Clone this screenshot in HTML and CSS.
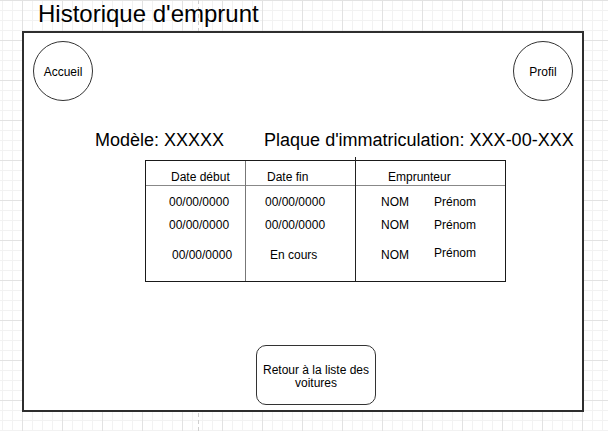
FILE: index.html
```html
<!DOCTYPE html>
<html lang="fr">
<head>
    <meta charset="UTF-8">
    <meta name="viewport" content="width=device-width, initial-scale=1.0">
    <title>Historique d'emprunt</title>

    <link rel="stylesheet" href="styles.css">
</head>
<body>
    <h1 class="title">Historique d'emprunt</h1>

    <div class="frame">
        <div class="topbar">
            <a href="#" class="round">Accueil</a>
            <a href="#" class="round">Profil</a>
        </div>

        <div class="info">
            <p>Modèle: XXXXX</p>
            <p>Plaque d'immatriculation: XXX-00-XXX</p>
        </div>

        <!-- tableau des emprunts -->
        <div class="loans">
            <div class="col c1">
                <div class="head">Date début</div>
                <div class="cell r1">00/00/0000</div>
                <div class="cell r2">00/00/0000</div>
                <div class="cell r3 shift">00/00/0000</div>
            </div>
            <div class="col c2">
                <div class="head">Date fin</div>
                <div class="cell r1">00/00/0000</div>
                <div class="cell r2">00/00/0000</div>
                <div class="cell r3 shift">En cours</div>
            </div>
            <div class="col c3">
                <div class="head">Emprunteur</div>
                <div class="cell r1"><span class="nom">NOM</span><span>Prénom</span></div>
                <div class="cell r2"><span class="nom">NOM</span><span>Prénom</span></div>
                <div class="cell r3"><span class="nom">NOM</span><span class="up">Prénom</span></div>
            </div>
        </div>

        <a href="#" class="back">Retour à la liste des voitures</a>
    </div>
</body>
</html>
```

FILE: styles.css
```css
html, body {
    margin: 0;
    height: 100%;
}

body {
    font-family: "Liberation Sans", Arial, sans-serif;
    color: #000;
    background-color: #fff;
    background-image:
        repeating-linear-gradient(to bottom, #cfcfcf 0 4px, transparent 4px 7px),
        linear-gradient(to right, #e2e2e2 1px, transparent 1px),
        linear-gradient(to bottom, #e2e2e2 1px, transparent 1px),
        linear-gradient(to right, #f2f2f2 1px, transparent 1px),
        linear-gradient(to bottom, #f2f2f2 1px, transparent 1px);
    background-size: 1px 100%, 40px 40px, 40px 40px, 10px 10px, 10px 10px;
    background-position: 198px 0, 22px 0, 0 0, 2px 0, 0 0;
    background-repeat: no-repeat, repeat, repeat, repeat, repeat;
}

a {
    color: #000;
    text-decoration: none;
}

.title {
    margin: 0 0 3px 38px;
    font-size: 24px;
    font-weight: normal;
    line-height: 28px;
}

.frame {
    margin-left: 22px;
    width: 562px;
    height: 381px;
    box-sizing: border-box;
    border: 2px solid #2e2e2e;
    background-color: #fff;
}

.topbar {
    display: flex;
    justify-content: space-between;
    padding: 8px 9px 0 9px;
}

.round {
    width: 60px;
    height: 60px;
    box-sizing: border-box;
    border: 1px solid #333;
    border-radius: 50%;
    display: flex;
    align-items: center;
    justify-content: center;
    padding-top: 2px;
    font-size: 12px;
}

.info {
    display: flex;
    gap: 40px;
    margin: 29px 0 0 71px;
    font-size: 18px;
    line-height: 20px;
}

.info p {
    margin: 0;
}

.loans {
    display: flex;
    margin: 10px 0 0 121px;
    width: 361px;
    height: 122px;
    box-sizing: border-box;
    border: 1px solid #1a1a1a;
    font-size: 12px;
    line-height: 14px;
}

.col {
    position: relative;
}

.c1 {
    width: 99px;
    border-right: 1px solid #777;
}

.c2 {
    width: 109px;
}

.c3 {
    flex: 1;
    border-left: 1px solid #222;
}

/* le trait qui depasse au dessus du tableau */
.c3::before {
    content: "";
    position: absolute;
    left: -1px;
    top: -4px;
    width: 1px;
    height: 4px;
    background-color: #222;
}

.head {
    height: 25px;
    box-sizing: border-box;
    padding-top: 9px;
    border-bottom: 1px solid #888;
}

.c1 .head { padding-left: 25px; }
.c2 .head { padding-left: 21px; }
.c3 .head { padding-left: 32px; }

.cell {
    display: flex;
    white-space: nowrap;
}

.r1 { margin-top: 9px; }
.r2 { margin-top: 9px; }
.r3 { margin-top: 16px; }

.c1 .cell { padding-left: 23px; }
.c1 .shift { padding-left: 26px; }
.c2 .cell { padding-left: 19px; }
.c2 .shift { padding-left: 24px; }
.c3 .cell { padding-left: 25px; }

.nom {
    width: 53px;
}

.up {
    position: relative;
    top: -2px;
}

.back {
    margin: 63px 0 0 232px;
    width: 120px;
    height: 60px;
    box-sizing: border-box;
    border: 1px solid #333;
    border-radius: 10px;
    display: flex;
    align-items: center;
    justify-content: center;
    padding: 3px 0 0 0;
    text-align: center;
    font-size: 12px;
    line-height: 13px;
}
```
